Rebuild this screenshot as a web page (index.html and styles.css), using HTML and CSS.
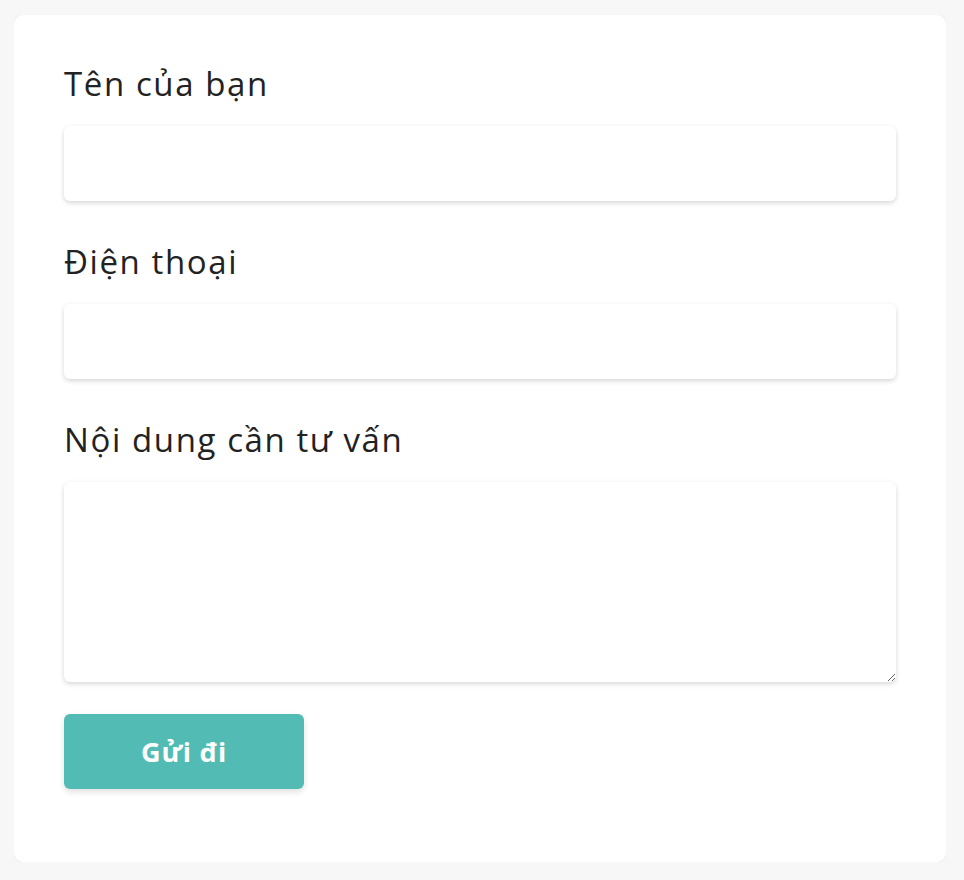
FILE: index.html
```html
<!DOCTYPE html>
<html lang="vi">
<head>
	<meta charset="UTF-8">
	<meta name="viewport" content="width=device-width, initial-scale=1.0">
	<title>Liên hệ tư vấn</title>
	<link rel="stylesheet" href="styles.css">
</head>
<body>
	<form class="card">
		<div class="field">
			<label for="ten">Tên của bạn</label>
			<input id="ten" type="text">
		</div>
		<div class="field">
			<label for="dienthoai">Điện thoại</label>
			<input id="dienthoai" type="text">
		</div>
		<div class="field last">
			<label for="noidung">Nội dung cần tư vấn</label>
			<textarea id="noidung"></textarea>
		</div>
		<button type="button">Gửi đi</button>
	</form>
</body>
</html>
```

FILE: styles.css
```css
html {
	background: #f7f7f7;
}
body {
	margin: 15px 18px 18px 14px;
	font-family: "Open Sans", "Noto Sans", sans-serif;
	color: #222;
}
.card {
	background: #fff;
	border-radius: 10px;
	box-shadow: 0 0 6px rgba(0, 0, 0, 0.05);
	padding: 45px 50px 73px 50px;
}
.field {
	display: flex;
	flex-direction: column;
	margin-bottom: 37px;
}
.field.last {
	margin-bottom: 32px;
}
label {
	font-size: 33px;
	line-height: 48px;
	margin-bottom: 18px;
	letter-spacing: 1.6px;
}
input, textarea {
	border: none;
	border-radius: 6px;
	box-shadow: 0 2px 5px rgba(0, 0, 0, 0.16);
	font-family: inherit;
	font-size: 24px;
	padding: 0 16px;
	outline: none;
	background: #fff;
}
input {
	height: 75px;
}
textarea {
	height: 200px;
	padding: 16px;
	box-sizing: border-box;
	resize: vertical;
}
button {
	width: 240px;
	height: 75px;
	border: none;
	border-radius: 6px;
	background: #52bcb4;
	color: #fff;
	font-family: inherit;
	font-size: 27px;
	font-weight: bold;
	letter-spacing: 0.8px;
	box-shadow: 0 3px 6px rgba(0, 0, 0, 0.12);
}
```
